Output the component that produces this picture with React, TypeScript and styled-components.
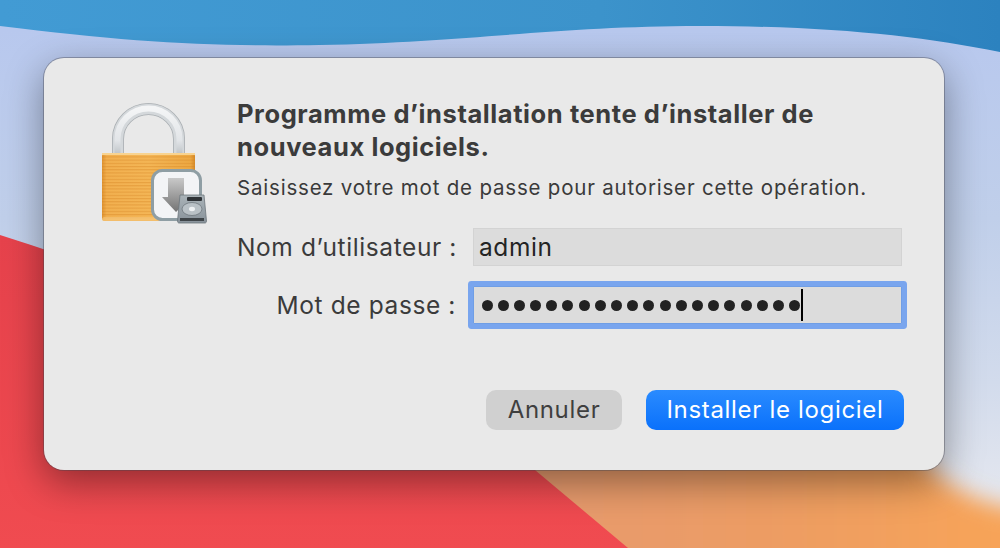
import React from "react";
import styled, { createGlobalStyle } from "styled-components";

const Global = createGlobalStyle`
  html, body { margin: 0; padding: 0; width: 1000px; height: 548px; overflow: hidden; background: #3f97d0; }
  #root { width: 1000px; height: 548px; }
`;

const Desktop = styled.div`
  position: relative;
  width: 1000px;
  height: 548px;
  overflow: hidden;
  box-sizing: border-box;
  padding: 58px 56px 78px 44px;
  font-family: Inter, "Liberation Sans", sans-serif;
`;

const WallpaperArt = styled.svg`
  position: absolute;
  inset: 0;
`;

const Dialog = styled.div`
  position: relative;
  box-sizing: border-box;
  width: 900px;
  height: 412px;
  background: #e9e9e9;
  border-radius: 20px;
  box-shadow: 0 0 0 1px rgba(70, 70, 80, 0.4), 0 12px 38px rgba(0, 0, 0, 0.4);
  display: grid;
  grid-template-columns: 193px 1fr;
`;

const IconColumn = styled.div`
  padding: 44px 0 0 56px;
`;

const Content = styled.div`
  padding: 39px 40px 40px 0;
  display: flex;
  flex-direction: column;
`;

const Heading = styled.h1`
  margin: 0;
  font-size: 25.5px;
  line-height: 33px;
  font-weight: 700;
  letter-spacing: 0.58px;
  color: #3b3b3b;
  white-space: nowrap;
`;

const Subtitle = styled.p`
  margin: 12px 0 0;
  font-size: 20.5px;
  line-height: 26px;
  letter-spacing: 0.8px;
  color: #3a3a3a;
  white-space: nowrap;
`;

const Form = styled.div`
  margin-top: 27px;
  display: grid;
  grid-template-columns: 236px 429px;
  grid-auto-rows: 38px;
  row-gap: 20px;
  align-items: center;
`;

const Label = styled.label`
  font-size: 24.5px;
  letter-spacing: 0.6px;
  text-align: right;
  padding-right: 17px;
  color: #3b3b3b;
  white-space: nowrap;
`;

const Field = styled.div<{ $focused?: boolean }>`
  box-sizing: border-box;
  height: 38px;
  background: #dcdcdc;
  border: 1px solid #d3d3d3;
  font-size: 24.5px;
  letter-spacing: 0.6px;
  color: #242424;
  padding-left: 5px;
  display: flex;
  align-items: center;
  ${(p) => p.$focused && `
    border: 1px solid #6f9ee6;
    box-shadow: 0 0 0 5px #79a5ee;
    border-radius: 1px;
  `}
`;

const Dots = styled.div`
  display: flex;
  gap: 5.2px;
  margin-left: 2.5px;
`;

const Dot = styled.span`
  width: 11px;
  height: 11px;
  border-radius: 50%;
  background: #222222;
`;

const Caret = styled.span`
  width: 2px;
  height: 32px;
  background: #000;
  margin-left: 1px;
`;

const Actions = styled.div`
  margin-top: auto;
  display: flex;
  justify-content: flex-end;
  gap: 24px;
`;

const Button = styled.button<{ $primary?: boolean }>`
  height: 40px;
  width: ${(p) => (p.$primary ? "258px" : "136px")};
  padding: 0 0 2px;
  border: 0;
  border-radius: 10px;
  font-family: inherit;
  font-size: 24px;
  letter-spacing: 0.68px;
  font-weight: 400;
  color: ${(p) => (p.$primary ? "#ffffff" : "#3f3f3f")};
  background: ${(p) => (p.$primary ? "linear-gradient(#2a8bff, #0a71fb)" : "#d0d0d0")};
`;

function Wallpaper() {
  return (
    <WallpaperArt width="1000" height="548" viewBox="0 0 1000 548">
      <defs>
        <linearGradient id="sky" x1="0" y1="0" x2="1" y2="0">
          <stop offset="0" stopColor="#429bd4" />
          <stop offset="0.6" stopColor="#3c93cb" />
          <stop offset="1" stopColor="#2c82bf" />
        </linearGradient>
        <linearGradient id="lav" gradientUnits="userSpaceOnUse" x1="0" y1="30" x2="0" y2="500">
          <stop offset="0" stopColor="#b8c8ee" />
          <stop offset="0.4" stopColor="#c0cfea" />
          <stop offset="0.75" stopColor="#d2dbec" />
          <stop offset="1" stopColor="#e4e7ef" />
        </linearGradient>
        <linearGradient id="red" x1="0" y1="0" x2="0" y2="1">
          <stop offset="0" stopColor="#e6424c" />
          <stop offset="1" stopColor="#f04b50" />
        </linearGradient>
        <linearGradient id="peach" x1="0" y1="0" x2="1" y2="0">
          <stop offset="0" stopColor="#e59a72" />
          <stop offset="0.5" stopColor="#ec9c64" />
          <stop offset="1" stopColor="#f9a556" />
        </linearGradient>
        <filter id="soft" x="-10%" y="-30%" width="120%" height="160%">
          <feGaussianBlur stdDeviation="11" />
        </filter>
      </defs>
      <rect width="1000" height="548" fill="url(#sky)" />
      <path d="M0 26 C130 42 210 47 320 45 C470 42 560 26 700 26 C830 26 920 36 1000 52 V548 H0 Z" fill="url(#lav)" />
      <path d="M470 430 H900 C935 480 965 505 1040 512 V620 H470 Z" fill="url(#peach)" filter="url(#soft)" />
      <path d="M0 235 Q300 330 535 470 L628 548 H0 Z" fill="url(#red)" />
    </WallpaperArt>
  );
}

function LockIcon() {
  return (
    <svg width="108" height="124" viewBox="0 0 108 124">
      <defs>
        <linearGradient id="body" x1="0" y1="0" x2="1" y2="0">
          <stop offset="0" stopColor="#df9432" />
          <stop offset="0.05" stopColor="#f2b04f" />
          <stop offset="0.5" stopColor="#f4b656" />
          <stop offset="0.95" stopColor="#eda943" />
          <stop offset="1" stopColor="#d58a28" />
        </linearGradient>
        <pattern id="ribs" width="4" height="3.2" patternUnits="userSpaceOnUse">
          <rect width="4" height="1.1" fill="#d27f1c" opacity="0.38" />
        </pattern>
        <linearGradient id="down" x1="0" y1="0" x2="0" y2="1">
          <stop offset="0" stopColor="#c9c9c9" />
          <stop offset="1" stopColor="#747474" />
        </linearGradient>
        <linearGradient id="disk" x1="0" y1="0" x2="0" y2="1">
          <stop offset="0" stopColor="#aab3b8" />
          <stop offset="1" stopColor="#88929a" />
        </linearGradient>
        <linearGradient id="arch" x1="0" y1="0" x2="0" y2="1">
          <stop offset="0" stopColor="#f4f5f6" />
          <stop offset="0.7" stopColor="#e2e5e8" />
          <stop offset="1" stopColor="#bfc4c8" />
        </linearGradient>
      </defs>
      <g fill="none">
        <path d="M18 52 V37 A30.5 30 0 0 1 79 37 V52" stroke="#a9aeb2" strokeWidth="12" />
        <path d="M18 52 V37 A30.5 30 0 0 1 79 37 V52" stroke="#d4d8db" strokeWidth="10.4" />
        <path d="M17.5 52 V37 A31 30.5 0 0 1 79.5 37 V52" stroke="url(#arch)" strokeWidth="6" />
      </g>
      <rect x="2" y="51" width="93" height="68" rx="3" fill="url(#body)" />
      <rect x="2" y="51" width="93" height="68" rx="3" fill="url(#ribs)" />
      <rect x="2" y="51" width="93" height="2" fill="#f8d390" />
      <rect x="2" y="115" width="93" height="4" rx="2" fill="#f6c77c" opacity="0.7" />
      <rect x="52.5" y="68.5" width="48" height="49" rx="10" fill="#f3f4f6" stroke="#8f9ea4" strokeWidth="3" />
      <path d="M68 76 H84 V95 H91 L76 110 L62 95 H68 Z" fill="url(#down)" />
      <path d="M80 93 H104 L106.5 119 C106.5 120 106 121 105 121 H79 C78 121 77.5 120 77.5 119 Z" fill="url(#disk)" stroke="#6d767c" strokeWidth="0.8" />
      <rect x="87" y="95" width="15" height="4" rx="1" fill="#2e3236" />
      <ellipse cx="92" cy="107" rx="10" ry="6.5" fill="#b9c1c6" stroke="#6e777d" strokeWidth="0.8" />
      <ellipse cx="92" cy="107" rx="3" ry="2.2" fill="#eef1f3" />
      <rect x="80" y="116" width="24" height="3" fill="#3f4549" />
    </svg>
  );
}

export default function App() {
  return (
    <>
      <Global />
      <Desktop>
        <Wallpaper />
        <Dialog>
          <IconColumn>
            <LockIcon />
          </IconColumn>
          <Content>
            <Heading>
              Programme d’installation tente d’installer de
              <br />
              nouveaux logiciels.
            </Heading>
            <Subtitle>Saisissez votre mot de passe pour autoriser cette opération.</Subtitle>
            <Form>
              <Label>Nom d’utilisateur :</Label>
              <Field>admin</Field>
              <Label>Mot de passe :</Label>
              <Field $focused>
                <Dots>
                  {Array.from({ length: 20 }, (_, i) => (
                    <Dot key={i} />
                  ))}
                </Dots>
                <Caret />
              </Field>
            </Form>
            <Actions>
              <Button>Annuler</Button>
              <Button $primary>Installer le logiciel</Button>
            </Actions>
          </Content>
        </Dialog>
      </Desktop>
    </>
  );
}
